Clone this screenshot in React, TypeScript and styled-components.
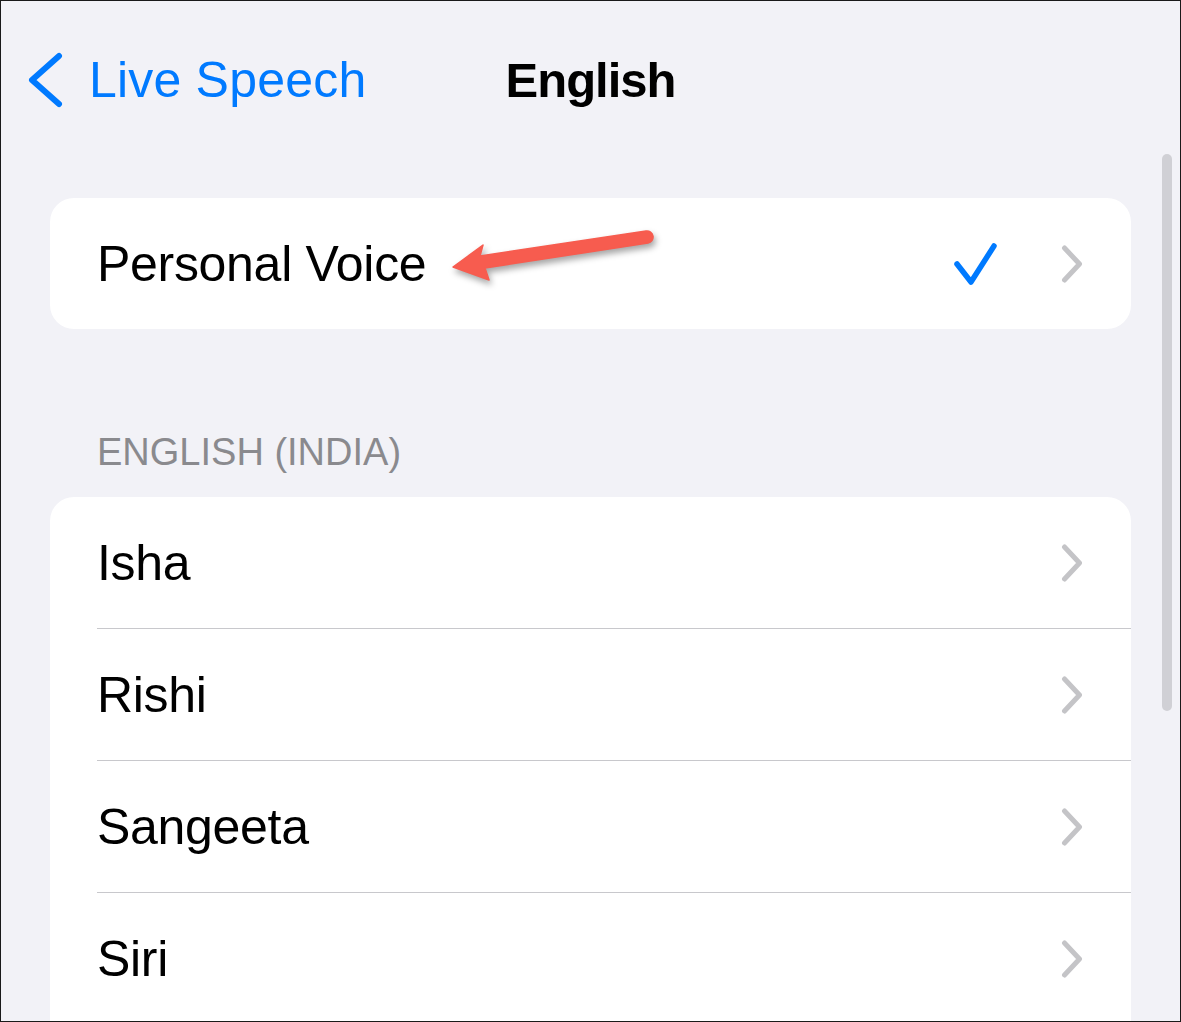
import React from "react";
import styled, { createGlobalStyle } from "styled-components";

const GlobalStyle = createGlobalStyle`
  html, body {
    margin: 0;
    padding: 0;
    background: #f2f2f7;
  }
  * {
    box-sizing: border-box;
  }
`;

const Screen = styled.div`
  position: relative;
  width: 1181px;
  height: 1022px;
  overflow: hidden;
  border: 1px solid #1a1a1a;
  background: #f2f2f7;
  font-family: "Liberation Sans", Arial, sans-serif;
  color: #000;
`;

const NavBar = styled.header`
  height: 158px;
  display: grid;
  grid-template-columns: 1fr auto 1fr;
  align-items: center;
  padding: 0 26px;
`;

const BackButton = styled.div`
  display: flex;
  align-items: center;
  gap: 26px;
  color: #007aff;
  font-size: 50px;
  letter-spacing: 0.2px;
  line-height: 1;
`;

const Title = styled.h1`
  margin: 0;
  font-size: 49px;
  font-weight: 700;
  letter-spacing: -1px;
  line-height: 1;
`;

const Content = styled.main`
  padding: 39px 49px 0;
  display: flex;
  flex-direction: column;
`;

const Card = styled.section<{ continues?: boolean }>`
  flex-shrink: 0;
  background: #fff;
  border-radius: 24px;
  overflow: hidden;
  padding-bottom: ${(p) => (p.continues ? "60px" : "0")};
`;

const Row = styled.div<{ divider?: boolean }>`
  position: relative;
  height: ${(p) => (p.divider ? "132px" : "131px")};
  display: flex;
  align-items: center;
  padding: ${(p) => (p.divider ? "1px" : "0")} 48px 0 47px;
  &::before {
    content: "";
    display: ${(p) => (p.divider ? "block" : "none")};
    position: absolute;
    top: 0;
    left: 47px;
    right: 0;
    height: 1px;
    background: #c8c8cc;
  }
`;

const Label = styled.span`
  flex: 1;
  font-size: 50px;
  letter-spacing: -0.3px;
  line-height: 1;
`;

const Accessory = styled.div`
  display: flex;
  align-items: center;
  gap: 62px;
`;

const SectionHeader = styled.h2`
  margin: 0;
  padding: 104px 0 26px 47px;
  font-size: 38px;
  font-weight: 400;
  line-height: 1;
  color: #8a8a8e;
`;

const ScrollIndicator = styled.div`
  position: absolute;
  left: 1161px;
  top: 153px;
  width: 10px;
  height: 557px;
  border-radius: 5px;
  background: #d0d0d5;
`;

const Annotation = styled.svg`
  position: absolute;
  left: 439px;
  top: 219px;
  overflow: visible;
  filter: drop-shadow(2px 4px 3px rgba(0, 0, 0, 0.35));
`;

function BackChevron() {
  return (
    <svg width="36" height="56" viewBox="0 0 36 56">
      <path
        d="M32 4 L5 28 L32 52"
        fill="none"
        stroke="#007aff"
        strokeWidth="6"
        strokeLinecap="round"
        strokeLinejoin="round"
      />
    </svg>
  );
}

function Chevron() {
  return (
    <svg width="22" height="38" viewBox="0 0 22 38">
      <path
        d="M3.5 3 L18.5 19 L3.5 35"
        fill="none"
        stroke="#c4c4c7"
        strokeWidth="5"
        strokeLinecap="round"
        strokeLinejoin="round"
      />
    </svg>
  );
}

function Check() {
  return (
    <svg width="46" height="44" viewBox="0 0 46 44">
      <path
        d="M4 22 L18 40 L41 4"
        fill="none"
        stroke="#007aff"
        strokeWidth="5.5"
        strokeLinecap="round"
        strokeLinejoin="round"
      />
    </svg>
  );
}

function RedArrow() {
  return (
    <Annotation width="230" height="80" viewBox="0 0 230 80">
      <path
        d="M13 47 L43 25 L40 36 L206 11 A6 6 0 0 1 208 23 L45 48 L49 60 Z"
        fill="#f75c4f"
        stroke="#f75c4f"
        strokeWidth="1.5"
        strokeLinejoin="round"
      />
    </Annotation>
  );
}

const voices = ["Isha", "Rishi", "Sangeeta", "Siri"];

export default function App() {
  return (
    <>
      <GlobalStyle />
      <Screen>
        <NavBar>
          <BackButton>
            <BackChevron />
            <span>Live Speech</span>
          </BackButton>
          <Title>English</Title>
          <div />
        </NavBar>
        <Content>
          <Card>
            <Row>
              <Label>Personal Voice</Label>
              <Accessory>
                <Check />
                <Chevron />
              </Accessory>
            </Row>
          </Card>
          <SectionHeader>ENGLISH (INDIA)</SectionHeader>
          <Card continues>
            {voices.map((name, i) => (
              <Row key={name} divider={i > 0}>
                <Label>{name}</Label>
                <Chevron />
              </Row>
            ))}
          </Card>
        </Content>
        <ScrollIndicator />
        <RedArrow />
      </Screen>
    </>
  );
}
